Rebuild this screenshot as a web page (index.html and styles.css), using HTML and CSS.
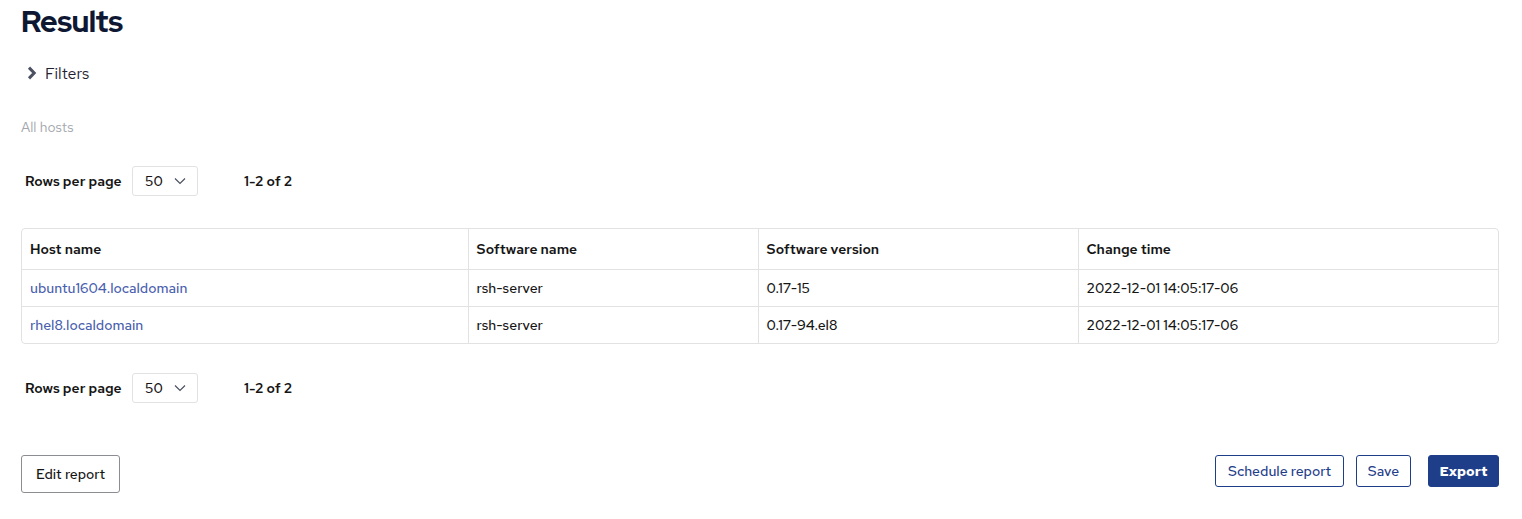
FILE: index.html
```html
<!DOCTYPE html>
<html>
<head>
<meta charset="utf-8">
<link rel="stylesheet" href="styles.css">
</head>
<body>
<div class="page">
  <h1 class="title">Results</h1>
  <div class="filters">
    <svg class="chev" width="10" height="14" viewBox="0 0 10 14"><path d="M2 1.6 L7.2 7 L2 12.4" fill="none" stroke="#4b5160" stroke-width="3" stroke-linejoin="miter"/></svg>
    <span>Filters</span>
  </div>
  <div class="subtitle">All hosts</div>
  <div class="pager pager-top">
    <span class="pager-label">Rows per page</span>
    <div class="select"><span>50</span><svg width="12" height="8" viewBox="0 0 12 8"><path d="M1 1.5 L6 6.5 L11 1.5" fill="none" stroke="#4b5160" stroke-width="1.2"/></svg></div>
    <span class="pager-count">1-2 of 2</span>
  </div>
  <div class="table-wrap">
    <table class="table">
      <colgroup>
        <col class="c1"><col class="c2"><col class="c3"><col class="c4">
      </colgroup>
      <thead>
        <tr><th>Host name</th><th>Software name</th><th>Software version</th><th>Change time</th></tr>
      </thead>
      <tbody>
        <tr><td><a class="link">ubuntu1604.localdomain</a></td><td>rsh-server</td><td>0.17-15</td><td>2022-12-01 14:05:17-06</td></tr>
        <tr><td><a class="link">rhel8.localdomain</a></td><td>rsh-server</td><td>0.17-94.el8</td><td>2022-12-01 14:05:17-06</td></tr>
      </tbody>
    </table>
  </div>
  <div class="pager pager-bottom">
    <span class="pager-label">Rows per page</span>
    <div class="select"><span>50</span><svg width="12" height="8" viewBox="0 0 12 8"><path d="M1 1.5 L6 6.5 L11 1.5" fill="none" stroke="#4b5160" stroke-width="1.2"/></svg></div>
    <span class="pager-count">1-2 of 2</span>
  </div>
  <div class="actions">
    <button class="btn btn-gray">Edit report</button>
    <div class="actions-right">
      <button class="btn btn-outline btn-schedule">Schedule report</button>
      <button class="btn btn-outline btn-save">Save</button>
      <button class="btn btn-primary">Export</button>
    </div>
  </div>
</div>
</body>
</html>
```

FILE: styles.css
```css
* { box-sizing: border-box; }
html, body { margin: 0; padding: 0; background: #fff; }
body {
  font-family: "Red Hat Text", Inter, "Noto Sans", sans-serif;
  color: #151515;
}
.page {
  padding: 0 23px 0 21px;
}
.title {
  margin: 0;
  padding-top: 4px;
  height: 44px;
  font-family: "Red Hat Display", Inter, "Noto Sans", sans-serif;
  font-size: 30px;
  font-weight: 800;
  letter-spacing: -0.5px;
  color: #0f1833;
  line-height: 34px;
}
.filters {
  display: flex;
  align-items: center;
  gap: 8px;
  height: 24px;
  margin-top: 17px;
  padding-left: 6px;
  font-size: 16px;
  color: #1f2330;
}
.chev { display: block; }
.subtitle {
  margin-top: 34px;
  font-size: 14px;
  color: #a4a7ad;
  height: 16px;
  line-height: 16px;
}
.pager {
  display: flex;
  align-items: center;
  height: 30px;
  padding-left: 4px;
  font-size: 14px;
  font-weight: 600;
  color: #151515;
}
.pager-top { margin-top: 31px; }
.pager-bottom { margin-top: 29px; }
.pager-label { width: 107px; }
.select {
  width: 66px;
  height: 30px;
  border: 1px solid #e2e2e2;
  border-radius: 3px;
  display: flex;
  align-items: center;
  gap: 11px;
  padding-left: 12px;
  font-size: 14px;
  font-weight: 500;
}
.select svg { display: block; }
.pager-count { margin-left: 46px; }
.table-wrap {
  margin-top: 32px;
  border: 1px solid #e2e2e2;
  border-radius: 4px;
  overflow: hidden;
}
.table {
  width: 100%;
  border-collapse: collapse;
  table-layout: fixed;
  font-size: 14px;
}
.c1 { width: 446px; }
.c2 { width: 290px; }
.c3 { width: 320px; }
.table th, .table td {
  text-align: left;
  padding: 0 0 0 8px;
  border-left: 1px solid #e2e2e2;
  border-top: 1px solid #e2e2e2;
}
.table th:first-child, .table td:first-child { border-left: none; }
.table thead th {
  border-top: none;
  height: 40px;
  font-weight: 600;
  color: #151515;
}
.table td {
  height: 37px;
  font-weight: 500;
  color: #151515;
}
.link {
  color: #4a5fae;
  font-weight: 500;
}
.actions {
  margin-top: 52px;
  display: flex;
  justify-content: space-between;
  align-items: flex-start;
}
.actions-right {
  display: flex;
  gap: 12px;
}
.actions-right .btn-primary { margin-left: 5px; }
.btn {
  font-family: inherit;
  font-size: 14px;
  background: #fff;
  border-radius: 3px;
  cursor: pointer;
  padding: 0;
}
.btn-gray {
  height: 38px;
  width: 99px;
  border: 1px solid #8b8d92;
  color: #151515;
  font-weight: 500;
}
.btn-outline {
  height: 32px;
  border: 1px solid #1f3e8a;
  color: #1f3e8a;
  font-weight: 500;
}
.btn-schedule { width: 129px; }
.btn-save { width: 55px; }
.btn-primary {
  height: 32px;
  width: 71px;
  border: 1px solid #1f3e8a;
  background: #1f3e8a;
  color: #fff;
  font-weight: 700;
}
```
